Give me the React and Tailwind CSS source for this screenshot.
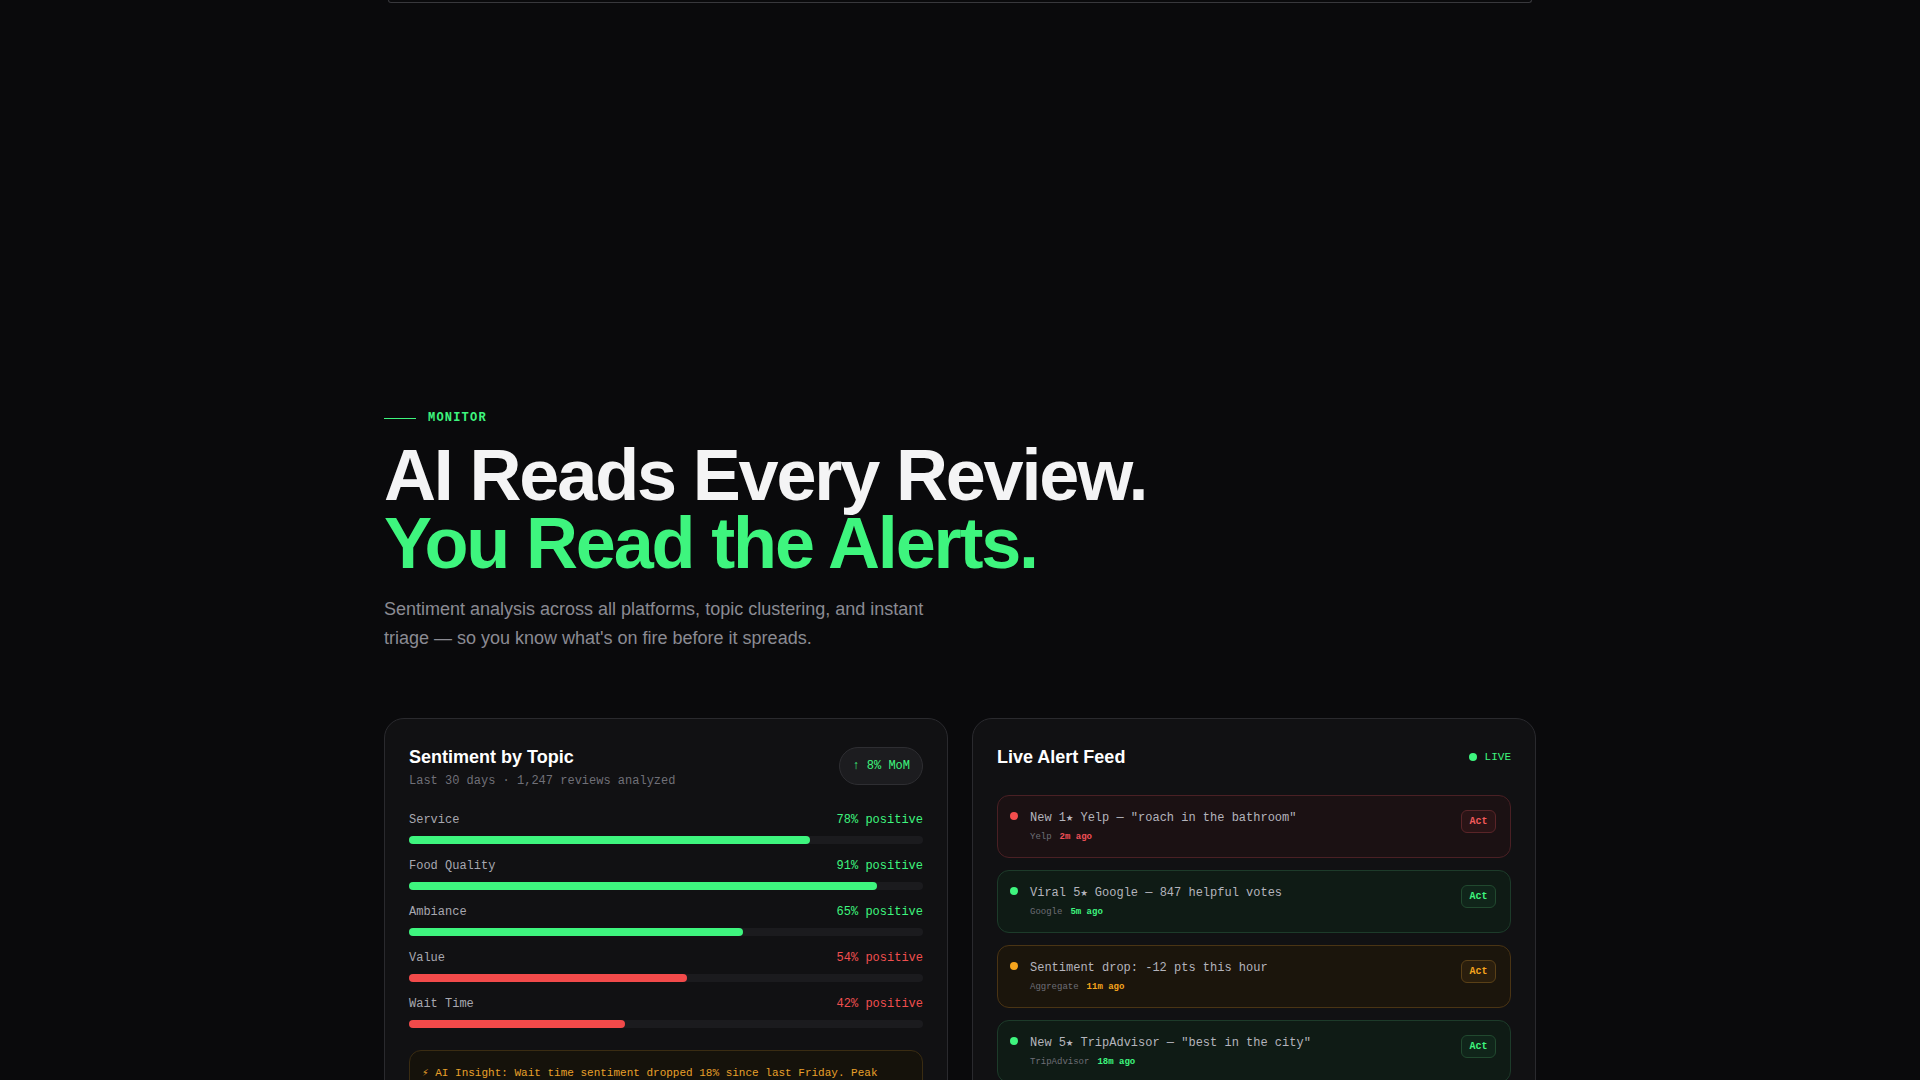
import React from "react";

const mono = "font-['Liberation_Mono','DejaVu_Sans_Mono',monospace]";

const topics = [
  { name: "Service", val: 78, good: true },
  { name: "Food Quality", val: 91, good: true },
  { name: "Ambiance", val: 65, good: true },
  { name: "Value", val: 54, good: false },
  { name: "Wait Time", val: 42, good: false },
];

const alerts = [
  {
    text: 'New 1★ Yelp — "roach in the bathroom"',
    src: "Yelp",
    ago: "2m ago",
    tone: "red",
  },
  {
    text: "Viral 5★ Google — 847 helpful votes",
    src: "Google",
    ago: "5m ago",
    tone: "green",
  },
  {
    text: "Sentiment drop: -12 pts this hour",
    src: "Aggregate",
    ago: "11m ago",
    tone: "amber",
  },
  {
    text: 'New 5★ TripAdvisor — "best in the city"',
    src: "TripAdvisor",
    ago: "18m ago",
    tone: "green",
  },
];

const tones = {
  red: {
    box: "border-[#4a2024] bg-[#1b1113]",
    dot: "bg-[#f34d4d]",
    ago: "text-[#f04f57]",
    btn: "border-[#5a2528] bg-[#2a1416] text-[#f15a5a]",
  },
  green: {
    box: "border-[#1d3b2a] bg-[#0f1b15]",
    dot: "bg-[#3ef57e]",
    ago: "text-[#3ef57e]",
    btn: "border-[#21492f] bg-[#10251a] text-[#3ef57e]",
  },
  amber: {
    box: "border-[#4a3414] bg-[#1b150c]",
    dot: "bg-[#f5a41d]",
    ago: "text-[#f5a41d]",
    btn: "border-[#5a4017] bg-[#2a1e0d] text-[#f5a41d]",
  },
};

const TopicCard = () => (
  <div className="bg-[#111113] border border-[#2a2a2e] rounded-[20px] p-6 h-[420px]">
    <div className="flex items-center justify-between mb-[21px]">
      <div>
        <h3 className="text-[18px] leading-7 font-bold text-white">
          Sentiment by Topic
        </h3>
        <p className={`${mono} text-[12px] leading-4 text-[#707078] mt-0.5`}>
          Last 30 days · 1,247 reviews analyzed
        </p>
      </div>
      <div
        className={`${mono} text-[12px] text-[#3ef57e] bg-[#1c1c1f] border border-[#2e2e32] rounded-full h-[38px] px-3 flex items-center`}
      >
        ↑ 8% MoM
      </div>
    </div>

    <div className="space-y-3">
      {topics.map((t) => (
        <div key={t.name}>
          <div className={`${mono} text-[12px] leading-5 flex justify-between mb-1.5`}>
            <span className="text-[#a8a8b0]">{t.name}</span>
            <span className={t.good ? "text-[#3ef57e]" : "text-[#f04f4f]"}>
              {t.val}% positive
            </span>
          </div>
          <div className="h-2 rounded-full bg-[#1b1b1e]">
            <div
              className={`h-2 rounded-full ${t.good ? "bg-[#3ef57e]" : "bg-[#f24a4a]"}`}
              style={{ width: `${t.val}%` }}
            />
          </div>
        </div>
      ))}
    </div>

    <div
      className={`${mono} mt-[22px] rounded-xl border border-[#3a2c12] bg-[#15120b] px-3 py-3 text-[11px] leading-5 text-[#e8a02a]`}
    >
      ⚡ AI Insight: Wait time sentiment dropped 18% since last Friday. Peak
      complaints cluster between 7–9 PM on weekends.
    </div>
  </div>
);

const AlertCard = () => (
  <div className="bg-[#111113] border border-[#2a2a2e] rounded-[20px] p-6 h-[420px]">
    <div className="flex items-center justify-between mb-6">
      <h3 className="text-[18px] leading-7 font-bold text-white">
        Live Alert Feed
      </h3>
      <div className={`${mono} flex items-center gap-2 text-[11px] text-[#3ef57e]`}>
        <span className="w-2 h-2 rounded-full bg-[#3ef57e]" />
        LIVE
      </div>
    </div>

    <div className="space-y-3">
      {alerts.map((a) => {
        const c = tones[a.tone];
        return (
          <div
            key={a.text}
            className={`border rounded-xl ${c.box} pl-3 pr-3.5 py-3.5 flex items-start`}
          >
            <span className={`w-2 h-2 rounded-full mt-0.5 shrink-0 ${c.dot}`} />
            <div className="ml-3 flex-1">
              <div className={`${mono} text-[12px] leading-4 text-[#b4b4bc]`}>
                {a.text}
              </div>
              <div className={`${mono} text-[9px] leading-3 mt-[5px] flex gap-2`}>
                <span className="text-[#6e6e76]">{a.src}</span>
                <span className={`font-bold ${c.ago}`}>{a.ago}</span>
              </div>
            </div>
            <button
              className={`${mono} text-[10px] font-bold border rounded-md w-[35px] h-[23px] ${c.btn}`}
            >
              Act
            </button>
          </div>
        );
      })}
    </div>
  </div>
);

export default function App() {
  return (
    <div className="min-h-screen bg-[#0a0a0c] font-['Liberation_Sans',Arial,sans-serif] overflow-hidden">
      <div className="mx-auto w-[1144px] h-[3px] border-b border-x border-[#38383c] rounded-b-[14px]" />

      <section className="mx-auto w-[1152px] pt-[406px]">
        <div className="flex items-center gap-3">
          <span className="w-8 h-px bg-[#3ef57e]" />
          <span className={`${mono} text-[12px] font-bold tracking-[0.1em] text-[#3ef57e]`}>
            MONITOR
          </span>
        </div>

        <h1 className="mt-[14px] text-[72px] leading-[68px] font-bold tracking-[-0.03em]">
          <span className="block text-[#f4f4f5]">AI Reads Every Review.</span>
          <span className="block text-[#3ef57e]">You Read the Alerts.</span>
        </h1>

        <p className="mt-[18px] max-w-[560px] text-[18px] leading-[29px] text-[#8b8b93]">
          Sentiment analysis across all platforms, topic clustering, and instant
          triage — so you know what's on fire before it spreads.
        </p>

        <div className="mt-[65px] grid grid-cols-2 gap-6">
          <TopicCard />
          <AlertCard />
        </div>
      </section>
    </div>
  );
}
